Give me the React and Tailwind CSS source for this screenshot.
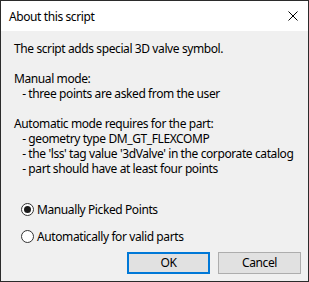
import React, { useState } from 'react';

const info = `The script adds special 3D valve symbol.

Manual mode:
   - three points are asked from the user

Automatic mode requires for the part:
   - geometry type DM_GT_FLEXCOMP
   - the 'lss' tag value '3dValve' in the corporate catalog
   - part should have at least four points`;

function Radio({ checked, label, onClick }) {
  return (
    <label className="flex items-center gap-[3px] h-[14px] cursor-default" onClick={onClick}>
      <span className="w-[13px] h-[13px] rounded-full border border-[#333333] bg-white flex items-center justify-center shrink-0">
        {checked && <span className="w-[7px] h-[7px] rounded-full bg-[#1b1b1b]" />}
      </span>
      <span>{label}</span>
    </label>
  );
}

export default function App() {
  const [mode, setMode] = useState('manual');

  return (
    <div
      className="w-[309px] h-[282px] border border-[#2b2b2b] flex flex-col bg-white text-black text-[12px] leading-[15px] tracking-[-0.4px]"
      style={{ fontFamily: '"Noto Sans", sans-serif' }}
    >
      {/* Title bar */}
      <div className="h-[30px] flex items-center justify-between pl-[8px] pr-[10px] bg-white shrink-0">
        <span className="text-[12px]">About this script</span>
        <svg width="10" height="10" viewBox="0 0 10 10">
          <path d="M0.5 0.5 L9.5 9.5 M9.5 0.5 L0.5 9.5" stroke="#000" strokeWidth="1" />
        </svg>
      </div>

      {/* Body */}
      <div className="flex-1 bg-[#f0f0f0] flex flex-col pl-[13px] pr-[7px] pt-[10px]">
        <p className="whitespace-pre">{info}</p>

        <div className="flex flex-col gap-[13px] mt-[26px] pl-[7px]">
          <Radio checked={mode === 'manual'} label="Manually Picked Points" onClick={() => setMode('manual')} />
          <Radio checked={mode === 'auto'} label="Automatically for valid parts" onClick={() => setMode('auto')} />
        </div>

        <div className="flex justify-end gap-[8px] mt-auto mb-[7px]">
          <button className="w-[83px] h-[22px] bg-[#e1e1e1] border-2 border-[#0078d7] leading-none">OK</button>
          <button className="w-[83px] h-[22px] bg-[#e1e1e1] border border-[#adadad] leading-none">Cancel</button>
        </div>
      </div>
    </div>
  );
}
